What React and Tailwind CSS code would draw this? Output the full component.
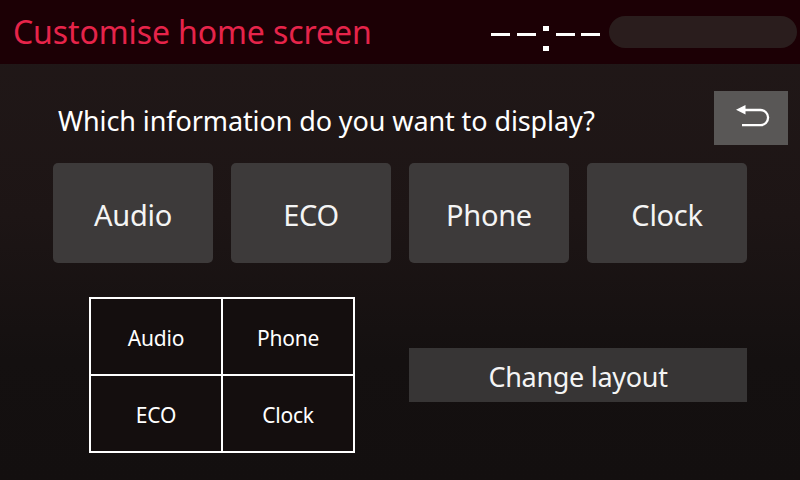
export default function App() {
  const font = { fontFamily: '"Noto Sans", "Open Sans", sans-serif' };
  const Dash = () => (
    <span className="block w-[19px] h-[3px] bg-white overflow-hidden text-[3px] leading-[3px] text-transparent select-none">
      -
    </span>
  );
  return (
    <div
      className="w-[800px] h-[480px] overflow-hidden flex flex-col bg-[linear-gradient(180deg,#211818_0%,#1d1515_45%,#141010_75%,#130f0f_100%)] text-white"
      style={font}
    >
      <header className="h-[64px] shrink-0 bg-[#1c0005] flex items-center">
        <h1 className="ml-[13px] text-[32px] leading-none text-[#e6244a] tracking-[-0.1px] pb-[1px]">
          Customise home screen
        </h1>
        <div className="ml-auto flex items-start h-[64px]">
          <div className="flex items-start h-[64px]" aria-label="--:--">
            <div className="flex gap-[7px] mt-[33px]">
              <Dash />
              <Dash />
            </div>
            <div className="flex flex-col justify-between h-[25px] mx-[7px] mt-[26px]">
              <div className="w-[6px] h-[5px] bg-white" />
              <div className="w-[6px] h-[5px] bg-white" />
            </div>
            <div className="flex gap-[6px] mt-[33px]">
              <Dash />
              <Dash />
            </div>
          </div>
          <div className="ml-[9px] mr-[3px] mt-[16px] w-[188px] h-[32px] rounded-full bg-[#2a1d1d]" />
        </div>
      </header>

      <main className="flex-1 pl-[53px] pt-[27px]">
        <div className="flex items-center h-[54px]">
          <p className="ml-[5px] text-[27px] leading-none tracking-[-0.1px] pt-[4px]">
            Which information do you want to display?
          </p>
          <button className="ml-auto mr-[12px] w-[74px] h-[54px] bg-[#595756] flex items-center justify-center">
            <svg width="74" height="54" viewBox="0 0 74 54">
              <path d="M22 18.7 L31.5 14 L31.5 23.4 Z" fill="#fff" />
              <path
                d="M31 19 H46.5 A7.6 7.6 0 0 1 46.5 34.2 H28"
                fill="none"
                stroke="#fff"
                strokeWidth="2.3"
              />
            </svg>
          </button>
        </div>

        <div className="mt-[18px] grid grid-cols-[repeat(4,160px)] gap-[18px]">
          {["Audio", "ECO", "Phone", "Clock"].map((t) => (
            <button
              key={t}
              className="h-[100px] rounded-[5px] bg-[#3d3a3a] text-[29px] text-[#f4f4f4] flex items-center justify-center tracking-[-0.3px] pt-[4px]"
            >
              {t}
            </button>
          ))}
        </div>

        <div className="mt-[34px] flex items-center">
          <div className="ml-[36px] w-[266px] h-[156px] border-2 border-white bg-[#140e0e] grid grid-cols-[130px_2px_130px] grid-rows-[75px_2px_75px]">
            <div className="flex items-center justify-center text-[21px] tracking-[-0.2px] pt-[4px]">Audio</div>
            <div className="bg-white" />
            <div className="flex items-center justify-center text-[21px] tracking-[-0.2px] pt-[4px]">Phone</div>
            <div className="col-span-3 bg-white" />
            <div className="flex items-center justify-center text-[21px] tracking-[-0.2px] pt-[4px]">ECO</div>
            <div className="bg-white" />
            <div className="flex items-center justify-center text-[21px] tracking-[-0.2px] pt-[4px]">Clock</div>
          </div>
          <button className="ml-[54px] w-[338px] h-[54px] bg-[#373535] text-[27px] text-[#f4f4f4] flex items-center justify-center tracking-[-0.3px] pt-[4px]">
            Change layout
          </button>
        </div>
      </main>
    </div>
  );
}
